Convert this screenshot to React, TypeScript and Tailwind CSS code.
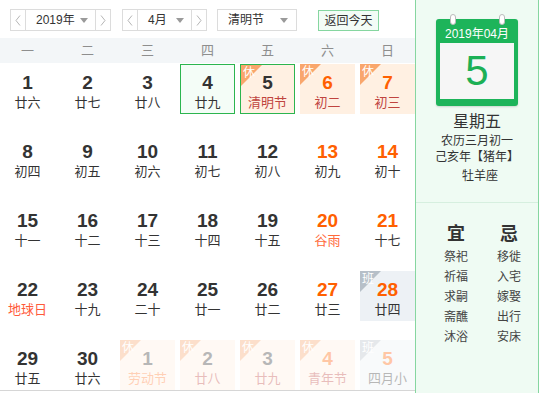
import React from "react";

type Cell = {
  d: number;
  l: string;
  wk?: boolean;
  kind?: "today" | "sel" | "hol" | "ban";
  other?: boolean;
  lc?: string;
};

const rows: Cell[][] = [
  [
    { d: 1, l: "廿六" },
    { d: 2, l: "廿七" },
    { d: 3, l: "廿八" },
    { d: 4, l: "廿九", kind: "today" },
    { d: 5, l: "清明节", kind: "sel", lc: "text-[#c0443f]" },
    { d: 6, l: "初二", wk: true, kind: "hol", lc: "text-[#c0443f]" },
    { d: 7, l: "初三", wk: true, kind: "hol", lc: "text-[#c0443f]" },
  ],
  [
    { d: 8, l: "初四" },
    { d: 9, l: "初五" },
    { d: 10, l: "初六" },
    { d: 11, l: "初七" },
    { d: 12, l: "初八" },
    { d: 13, l: "初九", wk: true },
    { d: 14, l: "初十", wk: true },
  ],
  [
    { d: 15, l: "十一" },
    { d: 16, l: "十二" },
    { d: 17, l: "十三" },
    { d: 18, l: "十四" },
    { d: 19, l: "十五" },
    { d: 20, l: "谷雨", wk: true, lc: "text-[#ff6a3a]" },
    { d: 21, l: "十七", wk: true },
  ],
  [
    { d: 22, l: "地球日", lc: "text-[#ff5a3a]" },
    { d: 23, l: "十九" },
    { d: 24, l: "二十" },
    { d: 25, l: "廿一" },
    { d: 26, l: "廿二" },
    { d: 27, l: "廿三", wk: true },
    { d: 28, l: "廿四", wk: true, kind: "ban" },
  ],
  [
    { d: 29, l: "廿五" },
    { d: 30, l: "廿六" },
    { d: 1, l: "劳动节", kind: "hol", other: true, lc: "text-[#ff7a30]" },
    { d: 2, l: "廿八", kind: "hol", other: true, lc: "text-[#c0443f]" },
    { d: 3, l: "廿九", kind: "hol", other: true, lc: "text-[#c0443f]" },
    { d: 4, l: "青年节", wk: true, kind: "hol", other: true, lc: "text-[#c0443f]" },
    { d: 5, l: "四月小", wk: true, kind: "ban", other: true },
  ],
];

const FONT = { fontFamily: '"Liberation Sans", Arial, "Noto Sans CJK SC", sans-serif' };

function Chevron({ dir }: { dir: "l" | "r" }) {
  return (
    <svg width="6" height="11" viewBox="0 0 6 11">
      {dir === "l" ? (
        <polyline points="5,0.5 1,5.5 5,10.5" fill="none" stroke="#b5b5b5" strokeWidth="1" />
      ) : (
        <polyline points="1,0.5 5,5.5 1,10.5" fill="none" stroke="#b5b5b5" strokeWidth="1" />
      )}
    </svg>
  );
}

function Caret() {
  return (
    <svg width="8" height="5" viewBox="0 0 8 5">
      <polygon points="0,0 8,0 4,5" fill="#9a9a9a" />
    </svg>
  );
}

function Stepper({ label, mid }: { label: string; mid: number }) {
  return (
    <div className="flex h-[22px] border border-[#dcdcdc] bg-white">
      <div className="flex w-[15px] items-center justify-center border-r border-[#dcdcdc]">
        <Chevron dir="l" />
      </div>
      <div className="flex items-center justify-between pl-[10px] pr-[7px]" style={{ width: mid }}>
        <span className="text-[12px] leading-none text-[#333]">{label}</span>
        <Caret />
      </div>
      <div className="flex w-[15px] items-center justify-center border-l border-[#dcdcdc]">
        <Chevron dir="r" />
      </div>
    </div>
  );
}

function Corner({ ban, text }: { ban?: boolean; text: string }) {
  return (
    <div className="absolute left-0 top-0 h-[21px] w-[21px]">
      <svg width="21" height="21" viewBox="0 0 21 21" className="absolute left-0 top-0">
        <polygon points="0,0 21,0 0,21" fill={ban ? "#b6bfc8" : "#f9a66c"} />
      </svg>
      <span className="absolute left-[2px] top-[1px] text-[12px] leading-[14px] text-white">{text}</span>
    </div>
  );
}

function DayCell({ c }: { c: Cell }) {
  let box = "bg-transparent";
  if (c.kind === "today") box = "border border-[#2cb54f] bg-[#f4fdf7]";
  if (c.kind === "sel") box = "border border-[#2cb54f] bg-[#fff0e2]";
  if (c.kind === "hol") box = "bg-[#fff0e2]";
  if (c.kind === "ban") box = "bg-[#edf1f5]";
  const numColor = c.wk ? "text-[#ff6000]" : "text-[#333333]";
  const lunarColor = c.lc ?? "text-[#333333]";
  const hol = c.kind === "hol" || c.kind === "sel";
  return (
    <div className={`relative flex h-[50px] w-[55px] flex-col items-center pt-[8px] ${box} ${c.other ? "opacity-35" : ""}`}>
      {hol && <Corner text="休" />}
      {c.kind === "ban" && <Corner ban text="班" />}
      <div className={`relative text-[19px] font-bold leading-[22px] ${c.kind === "today" || c.kind === "sel" ? "-mt-px" : ""} ${numColor}`}>{c.d}</div>
      <div className={`relative text-[13px] leading-[18px] ${lunarColor}`}>{c.l}</div>
    </div>
  );
}

export default function App() {
  const weeks = ["一", "二", "三", "四", "五", "六", "日"];
  const yi = ["祭祀", "祈福", "求嗣", "斋醮", "沐浴"];
  const ji = ["移徙", "入宅", "嫁娶", "出行", "安床"];
  return (
    <div className="flex h-[393px] w-[542px] overflow-hidden bg-white" style={FONT}>
      <div className="flex h-[391px] w-[415px] flex-col border-b border-[#d6d6d6]">
        <div className="flex h-[38px] items-start pt-[9px]">
          <div className="ml-[10px]">
            <Stepper label="2019年" mid={69} />
          </div>
          <div className="ml-[11px]">
            <Stepper label="4月" mid={53} />
          </div>
          <div className="ml-[10px] flex h-[22px] w-[80px] items-center justify-between border border-[#dcdcdc] pl-[10px] pr-[8px]">
            <span className="text-[12px] leading-none text-[#333]">清明节</span>
            <Caret />
          </div>
          <div className="ml-[21px] mt-[1px] flex h-[21px] w-[61px] items-center justify-center border border-[#86d6a0] bg-[#f3fcf6] text-[12px] leading-none text-[#333]">
            返回今天
          </div>
        </div>
        <div className="grid h-[25px] grid-cols-[repeat(7,55px)] gap-x-[5px] bg-[#f3f6f8]">
          {weeks.map((w) => (
            <div key={w} className="flex items-center justify-center text-[13px] text-[#8e8e8e]">
              {w}
            </div>
          ))}
        </div>
        <div className="mt-px grid grid-cols-[repeat(7,55px)] gap-x-[5px] gap-y-[19px]">
          {rows.flat().map((c, i) => (
            <DayCell key={i} c={c} />
          ))}
        </div>
      </div>
      <div className="flex h-[393px] w-[124px] flex-col items-center border-x border-[#86d6a0] bg-[#effbf3]">
        <div className="relative mt-[19px] flex h-[87px] w-[82px] flex-col rounded-[3px] bg-[#1db45a] shadow-[0_1px_2px_rgba(0,0,0,0.15)]">
          <div className="absolute -top-[5px] left-[14px] h-[11px] w-[6px] rounded-full border border-[#bbbbbb] bg-white" />
          <div className="absolute -top-[5px] left-[63px] h-[11px] w-[6px] rounded-full border border-[#bbbbbb] bg-white" />
          <div className="flex h-[24px] items-end justify-center pb-[3px] text-[12px] leading-none text-white">2019年04月</div>
          <div className="mx-[4px] flex h-[56px] items-center justify-center bg-[#f6f6f6]">
            <span className="text-[42px] leading-none text-[#1cb055]">5</span>
          </div>
        </div>
        <div className="mt-[6px] text-[16px] leading-[20px] text-[#333]">星期五</div>
        <div className="mt-px text-[12px] leading-[16px] text-[#333]">农历三月初一</div>
        <div className="text-[12px] leading-[16px] text-[#333]">己亥年【猪年】</div>
        <div className="ml-[6px] mt-[3px] text-[12px] leading-[16px] text-[#333]">牡羊座</div>
        <div className="mt-[18px] h-px w-full bg-[#d6efdf]" />
        <div className="flex w-full pl-[20px] pt-[20px]">
          <div className="flex w-[40px] flex-col items-center">
            <div className="text-[18px] font-bold leading-[22px] text-[#333]">宜</div>
            {yi.map((t) => (
              <div key={t} className="mt-[4px] text-[12px] leading-[16px] text-[#444]">{t}</div>
            ))}
          </div>
          <div className="ml-[13px] flex w-[40px] flex-col items-center">
            <div className="text-[18px] font-bold leading-[22px] text-[#333]">忌</div>
            {ji.map((t) => (
              <div key={t} className="mt-[4px] text-[12px] leading-[16px] text-[#444]">{t}</div>
            ))}
          </div>
        </div>
      </div>
    </div>
  );
}
